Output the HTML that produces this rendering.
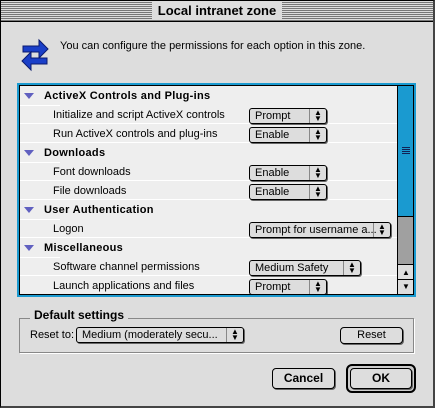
<!DOCTYPE html>
<html><head><style>
*{margin:0;padding:0;box-sizing:border-box}
body{width:435px;height:408px;background:#ddd;font-family:"Liberation Sans",sans-serif;font-size:11px;color:#000;position:relative;overflow:hidden}
.a{position:absolute}
.win{left:0;top:0;width:435px;height:408px;border:1px solid #000;border-right:2px solid #444;border-bottom:2px solid #444;background:#ddd}
.title{left:1px;top:1px;width:432px;height:21px;background:repeating-linear-gradient(#ddd 0 1px,#777 1px 2px);border-bottom:1px solid #000}
.ttext{left:152px;top:2px;width:130px;height:18px;background:#ddd;font-weight:bold;font-size:13px;text-align:center;line-height:18px}
.list{left:17px;top:83px;width:399px;height:214px;border:2px solid #1a9ad0;}
.inner{position:absolute;left:0;top:0;width:395px;height:210px;border:1px solid #000;background:#eee;overflow:hidden}
.row{position:absolute;left:0;height:19px;line-height:20px;width:378px}
.sep{border-bottom:1px solid #fff}
.hdr{font-weight:bold;padding-left:24px;letter-spacing:.3px}
.tri{position:absolute;left:4px;top:7px;width:0;height:0;border-left:5px solid transparent;border-right:5px solid transparent;border-top:6px solid #6060c0}
.lbl{padding-left:33px}
.pop{position:absolute;height:16px;border:1px solid #000;border-radius:3px;background:#ddd;line-height:14px;padding-left:5px;box-shadow:1px 1px 0 #666}
.pop .ar{position:absolute;right:0;top:0;width:17px;height:14px;border-left:1px solid #888;text-align:center;font-size:8px;line-height:6px;padding-top:1px}
.btn{position:absolute;border:1px solid #000;border-radius:4px;background:#ddd;text-align:center;box-shadow:1px 1px 0 #666}
</style></head><body>
<div class="a win"></div>
<div class="a title"></div>
<div class="a ttext">Local intranet zone</div>
<svg class="a" style="left:20px;top:38px" width="30" height="34" viewBox="0 0 30 34">
<g fill="#1a3fc8" stroke="#0a1a70" stroke-width="1">
<path d="M3 8h16v-6l9 9-9 9v-6h-16z"/>
<path d="M27 20h-16v-6l-9 9 9 9v-6h16z"/>
</g></svg>
<div class="a" style="left:60px;top:40px">You can configure the permissions for each option in this zone.</div>
<div class="a list"><div class="inner">
<div class="row hdr" style="top:0"><span class="tri"></span>ActiveX Controls and Plug-ins</div>
<div class="a" style="left:0;top:19px;width:40px;border-top:1px solid #fff"></div>
<div class="row lbl sep" style="top:19px">Initialize and script ActiveX controls</div>
<div class="row lbl sep" style="top:38px">Run ActiveX controls and plug-ins</div>
<div class="row hdr" style="top:57px"><span class="tri"></span>Downloads</div>
<div class="a" style="left:0;top:76px;width:40px;border-top:1px solid #fff"></div>
<div class="row lbl sep" style="top:76px">Font downloads</div>
<div class="row lbl sep" style="top:95px">File downloads</div>
<div class="row hdr" style="top:114px"><span class="tri"></span>User Authentication</div>
<div class="a" style="left:0;top:133px;width:40px;border-top:1px solid #fff"></div>
<div class="row lbl sep" style="top:133px">Logon</div>
<div class="row hdr" style="top:152px"><span class="tri"></span>Miscellaneous</div>
<div class="a" style="left:0;top:171px;width:40px;border-top:1px solid #fff"></div>
<div class="row lbl sep" style="top:171px">Software channel permissions</div>
<div class="row lbl" style="top:190px">Launch applications and files</div>
<div class="pop" style="left:229px;top:22px;width:78px">Prompt<span class="ar">▲<br>▼</span></div>
<div class="pop" style="left:229px;top:41px;width:78px">Enable<span class="ar">▲<br>▼</span></div>
<div class="pop" style="left:229px;top:79px;width:78px">Enable<span class="ar">▲<br>▼</span></div>
<div class="pop" style="left:229px;top:98px;width:78px">Enable<span class="ar">▲<br>▼</span></div>
<div class="pop" style="left:229px;top:136px;width:142px">Prompt for username a...<span class="ar">▲<br>▼</span></div>
<div class="pop" style="left:229px;top:174px;width:112px">Medium Safety<span class="ar">▲<br>▼</span></div>
<div class="pop" style="left:229px;top:193px;width:78px">Prompt<span class="ar">▲<br>▼</span></div>
<div class="a" style="left:377px;top:0;width:17px;height:208px;border-left:1px solid #000;background:#a0a0a0"></div>
<div class="a" style="left:378px;top:0;width:16px;height:131px;background:#1a9ad0;border-bottom:1px solid #000"></div>
<div class="a" style="left:382px;top:61px;width:8px;height:7px;background:repeating-linear-gradient(#125 0 1px,transparent 1px 2px)"></div>
<div class="a" style="left:378px;top:178px;width:16px;height:16px;background:#ddd;border-top:1px solid #000;border-bottom:1px solid #000;font-size:8px;text-align:center;line-height:15px">▲</div>
<div class="a" style="left:378px;top:194px;width:16px;height:15px;background:#ddd;font-size:8px;text-align:center;line-height:14px">▼</div>
</div></div>
<div class="a" style="left:19px;top:318px;width:395px;height:35px;border:1px solid #888;box-shadow:1px 1px 0 #fff"></div>
<div class="a" style="left:30px;top:308px;padding:0 4px;background:#ddd;font-weight:bold;font-size:12px">Default settings</div>
<div class="a" style="left:30px;top:329px">Reset to:</div>
<div class="pop" style="left:76px;top:327px;width:168px">Medium (moderately secu...<span class="ar">▲<br>▼</span></div>
<div class="btn" style="left:340px;top:327px;width:63px;height:17px;line-height:15px">Reset</div>
<div class="btn" style="left:272px;top:368px;width:63px;height:21px;line-height:19px;font-weight:bold;font-size:12px">Cancel</div>
<div class="a" style="left:346px;top:364px;width:70px;height:29px;border:2px solid #000;border-radius:6px;background:#ccc"></div>
<div class="btn" style="left:350px;top:368px;width:62px;height:21px;line-height:19px;font-weight:bold;font-size:12px">OK</div>
</body></html>
